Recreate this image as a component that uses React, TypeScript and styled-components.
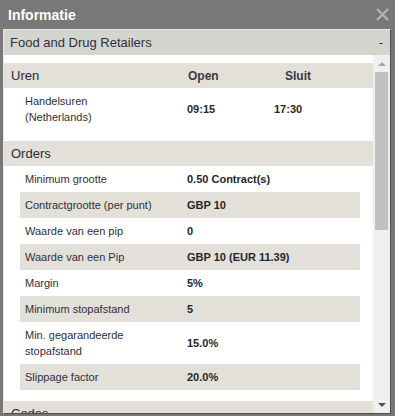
import React from 'react';
import styled, { createGlobalStyle } from 'styled-components';

interface Spec {
  label: string;
  value: string;
}

const orders: Spec[] = [
  { label: 'Minimum grootte', value: '0.50 Contract(s)' },
  { label: 'Contractgrootte (per punt)', value: 'GBP 10' },
  { label: 'Waarde van een pip', value: '0' },
  { label: 'Waarde van een Pip', value: 'GBP 10 (EUR 11.39)' },
  { label: 'Margin', value: '5%' },
  { label: 'Minimum stopafstand', value: '5' },
  { label: 'Min. gegarandeerde stopafstand', value: '15.0%' },
  { label: 'Slippage factor', value: '20.0%' },
];

const GlobalStyle = createGlobalStyle`
  html, body {
    margin: 0;
    padding: 0;
    background: #787878;
  }
  body {
    font-family: "Liberation Sans", Arial, sans-serif;
  }
`;

const Window = styled.div`
  width: 395px;
  height: 416px;
  background: #787878;
  display: flex;
  flex-direction: column;
  overflow: hidden;
`;

const TitleBar = styled.div`
  height: 29px;
  display: flex;
  align-items: center;
  justify-content: space-between;
  padding: 0 6px 0 8px;
  color: #fff;
  font-size: 14px;
  font-weight: bold;
`;

const CloseButton = styled.button`
  border: none;
  background: none;
  padding: 0;
  width: 13px;
  height: 13px;
  display: flex;
  cursor: pointer;
`;

const Panel = styled.div`
  margin: 0 4px 2px 3px;
  height: 385px;
  box-sizing: border-box;
  border-top: 1px solid #e6e6e6;
  border-left: 1px solid #e6e6e6;
  border-right: 1px solid #4e4e4e;
  border-bottom: 1px solid #4e4e4e;
  display: flex;
  flex-direction: column;
`;

const PanelHeader = styled.div`
  height: 25px;
  flex: none;
  background: #d5d5cf;
  display: flex;
  align-items: center;
  justify-content: space-between;
  padding: 0 7px 0 6px;
  font-size: 13px;
  color: #2f2f3a;
`;

const Body = styled.div`
  flex: 1;
  min-height: 0;
  display: flex;
`;

const Content = styled.div`
  flex: 1;
  overflow: hidden;
  background: #fff;
  padding-top: 8px;
`;

const SectionHeader = styled.div`
  height: 25px;
  background: #e3e0d9;
  display: grid;
  grid-template-columns: 177px 97px 1fr;
  align-items: center;
  padding-left: 7px;
  font-size: 13px;
  color: #2a2a34;
`;

const ColumnTitle = styled.span`
  font-size: 12px;
  font-weight: bold;
  color: #3a3a42;
`;

const Table = styled.div`
  margin: 0 13px 11px 16px;
`;

const Row = styled.div<{ $striped?: boolean; $cols?: string }>`
  display: grid;
  grid-template-columns: ${(p) => p.$cols || '162px 1fr'};
  align-items: center;
  padding: 5px 0;
  line-height: 16px;
  font-size: 11px;
  color: #2f2f3a;
  background: ${(p) => (p.$striped ? '#e3e0d9' : 'transparent')};
`;

const Label = styled.span`
  padding: 0 5px;
`;

const Value = styled.span`
  padding: 0 5px;
  font-weight: bold;
  color: #26262c;
`;

const Scrollbar = styled.div`
  width: 17px;
  flex: none;
  background: #f0f0f0;
  display: flex;
  flex-direction: column;
`;

const Arrow = styled.div<{ $down?: boolean }>`
  height: 17px;
  flex: none;
  display: flex;
  align-items: center;
  justify-content: center;
  &::after {
    content: '';
    border-left: 4px solid transparent;
    border-right: 4px solid transparent;
    ${(p) =>
      p.$down
        ? 'border-top: 4px solid #505050;'
        : 'border-bottom: 4px solid #a3a3a3;'}
  }
`;

const Track = styled.div`
  flex: 1;
  padding: 0 2px;
`;

const Thumb = styled.div`
  height: 158px;
  background: #c1c1c1;
`;

const Section: React.FC<{ title: string; rows: Spec[] }> = ({ title, rows }) => (
  <>
    <SectionHeader>
      <span>{title}</span>
    </SectionHeader>
    {rows.length > 0 && (
      <Table>
        {rows.map((r, i) => (
          <Row key={r.label} $striped={i % 2 === 1}>
            <Label>{r.label}</Label>
            <Value>{r.value}</Value>
          </Row>
        ))}
      </Table>
    )}
  </>
);

export default function App() {
  return (
    <Window>
      <GlobalStyle />
      <TitleBar>
        <span>Informatie</span>
        <CloseButton aria-label="Sluiten">
          <svg width="13" height="13" viewBox="0 0 13 13">
            <path d="M1 1 L12 12 M12 1 L1 12" stroke="#b4b4b4" strokeWidth="2.2" />
          </svg>
        </CloseButton>
      </TitleBar>
      <Panel>
        <PanelHeader>
          <span>Food and Drug Retailers</span>
          <span>-</span>
        </PanelHeader>
        <Body>
          <Content>
            <SectionHeader>
              <span>Uren</span>
              <ColumnTitle>Open</ColumnTitle>
              <ColumnTitle>Sluit</ColumnTitle>
            </SectionHeader>
            <Table>
              <Row $cols="162px 87px 1fr">
                <Label>
                  Handelsuren
                  <br />
                  (Netherlands)
                </Label>
                <Value>09:15</Value>
                <Value>17:30</Value>
              </Row>
            </Table>
            <Section title="Orders" rows={orders} />
            <Section title="Codes" rows={[]} />
          </Content>
          <Scrollbar>
            <Arrow />
            <Track>
              <Thumb />
            </Track>
            <Arrow $down />
          </Scrollbar>
        </Body>
      </Panel>
    </Window>
  );
}
